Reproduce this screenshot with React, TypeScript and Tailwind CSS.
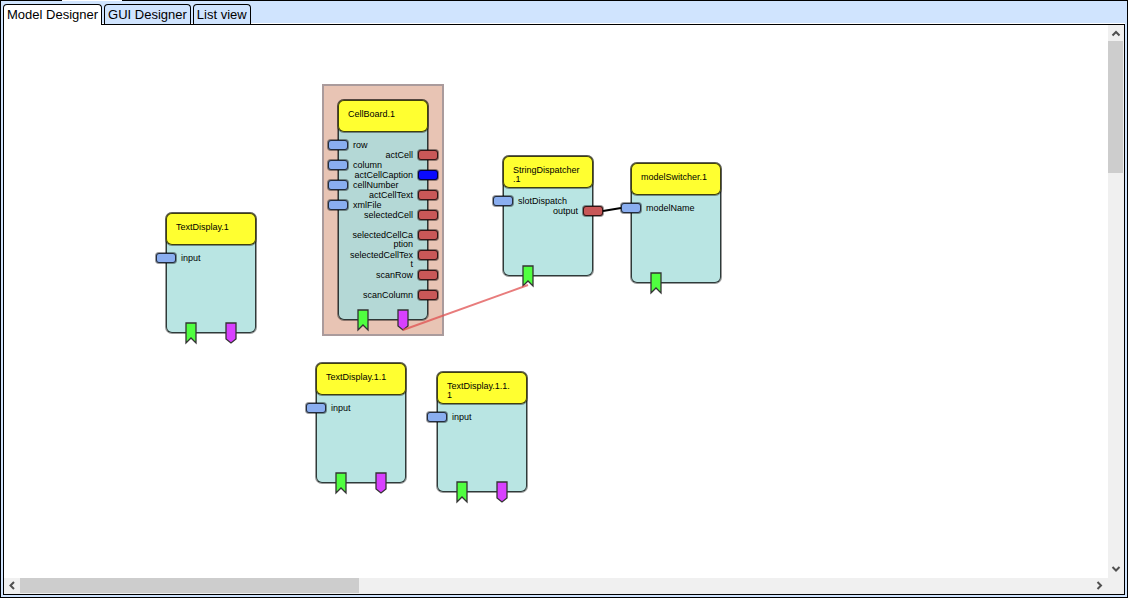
import clsx from 'clsx';

interface Port {
  label: string[];
  row: number;
  color?: string;
}

interface ModelNode {
  id: string;
  title: string[];
  x: number;
  y: number;
  height: number;
  inputs: Port[];
  outputs: Port[];
  hasTrigger?: boolean;
  selected?: boolean;
}

const tabs = ['Model Designer', 'GUI Designer', 'List view'];

// soft outer edge with a darker line just inside it
const outline = 'border border-black/40 bg-clip-padding shadow-[inset_0_0_0_1px_rgb(0_0_0/0.75)]';

const nodes: ModelNode[] = [
  {
    id: 'text1',
    title: ['TextDisplay.1'],
    x: 165,
    y: 212,
    height: 122,
    inputs: [{ label: ['input'], row: 40 }],
    outputs: [],
    hasTrigger: true,
  },
  {
    id: 'cellboard',
    title: ['CellBoard.1'],
    x: 337,
    y: 99,
    height: 222,
    selected: true,
    inputs: [
      { label: ['row'], row: 40 },
      { label: ['column'], row: 60 },
      { label: ['cellNumber'], row: 80 },
      { label: ['xmlFile'], row: 100 },
    ],
    outputs: [
      { label: ['actCell'], row: 50 },
      { label: ['actCellCaption'], row: 70, color: 'bg-[#0a0aff]' },
      { label: ['actCellText'], row: 90 },
      { label: ['selectedCell'], row: 110 },
      { label: ['selectedCellCa', 'ption'], row: 130 },
      { label: ['selectedCellTex', 't'], row: 150 },
      { label: ['scanRow'], row: 170 },
      { label: ['scanColumn'], row: 190 },
    ],
    hasTrigger: true,
  },
  {
    id: 'dispatcher',
    title: ['StringDispatcher', '.1'],
    x: 502,
    y: 155,
    height: 122,
    inputs: [{ label: ['slotDispatch'], row: 40 }],
    outputs: [{ label: ['output'], row: 50 }],
  },
  {
    id: 'switcher',
    title: ['modelSwitcher.1'],
    x: 630,
    y: 162,
    height: 122,
    inputs: [{ label: ['modelName'], row: 40 }],
    outputs: [],
  },
  {
    id: 'text11',
    title: ['TextDisplay.1.1'],
    x: 315,
    y: 362,
    height: 122,
    inputs: [{ label: ['input'], row: 40 }],
    outputs: [],
    hasTrigger: true,
  },
  {
    id: 'text111',
    title: ['TextDisplay.1.1.', '1'],
    x: 436,
    y: 371,
    height: 122,
    inputs: [{ label: ['input'], row: 40 }],
    outputs: [],
    hasTrigger: true,
  },
];

function Lines({ lines }: { lines: string[] }) {
  return (
    <>
      {lines.map((line) => (
        <span key={line} className="block whitespace-nowrap">
          {line}
        </span>
      ))}
    </>
  );
}

function NodeCard({ node }: { node: ModelNode }) {
  return (
    <div className="absolute w-[92px]" style={{ left: node.x - 4, top: node.y - 25, height: node.height }}>
      {node.selected && (
        <div className="absolute -inset-[15px] border-2 border-[#80808c]/60 bg-[#e8c4b4]" />
      )}
      <div
        className={clsx(
          'absolute inset-0 rounded-[7px]',
          outline,
          node.selected ? 'bg-[#b4d8d6]' : 'bg-[#b9e5e3]'
        )}
      />
      <div className={clsx('absolute inset-x-0 top-0 h-[34px] rounded-[7px] bg-[#ffff30] pt-[10px] pl-[10px] leading-[9px]', outline)}>
        <Lines lines={node.title} />
      </div>
      {node.inputs.map((port) => (
        <div key={port.row} className="absolute -left-[10px] flex gap-1" style={{ top: port.row }}>
          <span className={clsx('h-3 w-[22px] rounded-[4px] bg-[#8aaef0]', outline)} />
          <span className="pt-[2px] leading-[9px]">
            <Lines lines={port.label} />
          </span>
        </div>
      ))}
      {node.outputs.map((port) => (
        <div key={port.row} className="absolute -right-[10px] flex gap-1 text-right" style={{ top: port.row }}>
          <span className="pt-[2px] leading-[9px]">
            <Lines lines={port.label} />
          </span>
          <span className={clsx('h-3 w-[22px] rounded-[4px]', outline, port.color ?? 'bg-[#c85858]')} />
        </div>
      ))}
      <svg className="absolute -bottom-[11px] left-5 h-6 w-3" viewBox="0 0 12 24">
        <path d="M1 2H11V22L6 17L1 22Z" fill="#50ff40" stroke="#333" strokeWidth="1.3" />
      </svg>
      {node.hasTrigger && (
        <svg className="absolute -bottom-[11px] left-[60px] h-6 w-3" viewBox="0 0 12 24">
          <path d="M1 2H11V18L6 22L1 18Z" fill="#d840ff" stroke="#333" strokeWidth="1.3" />
        </svg>
      )}
    </div>
  );
}

function ScrollArrow({ label, d }: { label: string; d: string }) {
  return (
    <button aria-label={label} className="flex size-4 shrink-0 items-center justify-center">
      <svg className="size-4" viewBox="0 0 16 16" fill="none" stroke="#505050" strokeWidth="2">
        <path d={d} />
      </svg>
    </button>
  );
}

export default function App() {
  return (
    <div className="flex h-screen flex-col border border-black bg-[#d0e4fe] px-[2px] pt-[3px] pb-[2px] font-['Liberation_Sans',Arial,sans-serif] text-black">
      <div className="absolute top-0 left-[62px] h-px w-[60px] bg-white" />
      <div role="tablist" className="flex h-5 shrink-0 gap-[2px] shadow-[inset_0_-1px_0_white]">
        {tabs.map((tab, i) => (
          <button
            key={tab}
            role="tab"
            aria-selected={i === 0}
            className={clsx(
              'rounded-t-[4px] border border-b-0 border-black px-[3px] text-[13px] leading-5 whitespace-nowrap',
              i === 0 ? 'relative z-10 h-[21px] bg-white' : 'h-5 bg-[#d0e4fe]'
            )}
          >
            {tab}
          </button>
        ))}
      </div>
      <div className="grid min-h-0 flex-1 grid-cols-[1fr_16px] grid-rows-[1fr_16px] border border-black bg-[#f0f0f0]">
        <main className="relative overflow-hidden bg-white text-[9px]">
          {nodes.map((node) => (
            <NodeCard key={node.id} node={node} />
          ))}
          <svg className="pointer-events-none absolute top-0 left-0 h-[560px] w-[1100px]" viewBox="4 25 1100 560">
            <path d="M603 211L621 208" stroke="black" strokeWidth="2" />
            <path d="M403 330L528 285" stroke="#e05050" strokeOpacity="0.75" strokeWidth="2" />
          </svg>
        </main>
        <div className="flex flex-col">
          <ScrollArrow label="Scroll up" d="M4.5 10.5L8 7L11.5 10.5" />
          <div className="flex-1">
            <div className="mr-px h-[25.4%] bg-[#cdcdcd]" />
          </div>
          <ScrollArrow label="Scroll down" d="M4.5 5L8 8.5L11.5 5" />
        </div>
        <div className="flex">
          <ScrollArrow label="Scroll left" d="M10 4L6.5 7.5L10 11" />
          <div className="flex-1">
            <div className="h-[15px] w-[31.6%] bg-[#cdcdcd]" />
          </div>
          <ScrollArrow label="Scroll right" d="M5.5 4L9 7.5L5.5 11" />
        </div>
        <div />
      </div>
    </div>
  );
}
